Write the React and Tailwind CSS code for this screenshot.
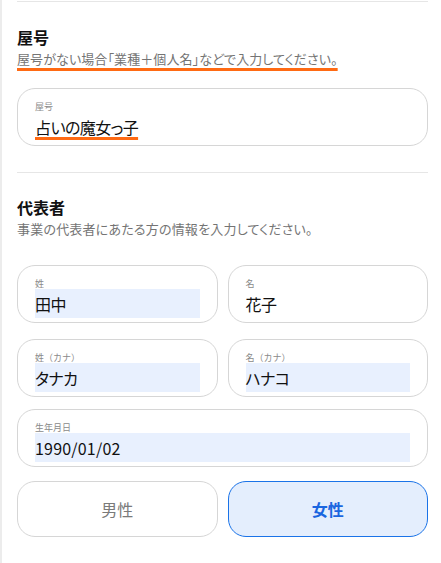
import React from "react";

const font = { fontFamily: '"Noto Sans CJK JP", "Noto Sans", sans-serif' };

function Field({ label, value, filled, className = "", underline, latin }) {
  return (
    <div
      className={
        "rounded-[18px] border border-[#d6d6d6] bg-white pl-[17px] pr-[17px] pt-[13px] pb-[4px] " +
        className
      }
    >
      <div className="text-[9px] leading-[10px] text-[#8a8a8a] [font-feature-settings:normal]">{label}</div>
      <div
        className={
          "h-[29px] flex items-center text-[16px] text-[#111] " +
          (latin ? "tracking-[0.2px] " : "tracking-[-0.6px] ") +
          (filled ? "bg-[#e8f0fe]" : "")
        }
      >
        {underline ? (
          <span className="underline decoration-[#ff6a13] decoration-[2.5px] underline-offset-[3px]">
            {value}
          </span>
        ) : (
          <span>{value}</span>
        )}
      </div>
    </div>
  );
}

export default function App() {
  return (
    <div
      className="min-h-[563px] bg-white border-l-2 border-[#ececec] pl-[15px] pr-[13px] [font-feature-settings:'palt']"
      style={font}
    >
      <div className="pt-px">
        <div className="h-px bg-[#e6e6e6]" />
      </div>

      <div className="pt-[23px]">
        <div className="text-[16px] leading-[24px] font-bold text-[#111]">屋号</div>
        <div className="text-[13px] leading-[20px] text-[#747474] tracking-[0.1px]">
          <span className="underline decoration-[#ff6a13] decoration-[2.5px] underline-offset-[4px]">
            屋号がない場合「業種＋個人名」などで入力してください。
          </span>
        </div>
        <Field className="mt-[19px]" label="屋号" value="占いの魔女っ子" underline />
      </div>

      <div className="mt-[26px] h-px bg-[#e6e6e6]" />

      <div className="pt-[22px]">
        <div className="text-[16px] leading-[24px] font-bold text-[#111]">代表者</div>
        <div className="text-[13px] leading-[20px] text-[#747474] tracking-[0.2px]">
          事業の代表者にあたる方の情報を入力してください。
        </div>

        <div className="mt-[26px] grid grid-cols-2 gap-[10px]">
          <Field label="姓" value="田中" filled />
          <Field label="名" value="花子" />
        </div>
        <div className="mt-[16px] grid grid-cols-2 gap-[10px]">
          <Field label="姓（カナ）" value="タナカ" filled />
          <Field label="名（カナ）" value="ハナコ" filled />
        </div>
        <Field className="mt-[12px]" label="生年月日" value="1990/01/02" filled latin />

        <div className="mt-[14px] grid grid-cols-2 gap-[10px]">
          <div className="h-[56px] rounded-[18px] border border-[#d6d6d6] bg-white flex items-center justify-center text-[16px] text-[#7a7a7a]">
            男性
          </div>
          <div className="h-[56px] rounded-[18px] border border-[#1a73e8] bg-[#e4eefd] flex items-center justify-center text-[16px] font-bold text-[#1a66e0]">
            女性
          </div>
        </div>
      </div>
    </div>
  );
}
